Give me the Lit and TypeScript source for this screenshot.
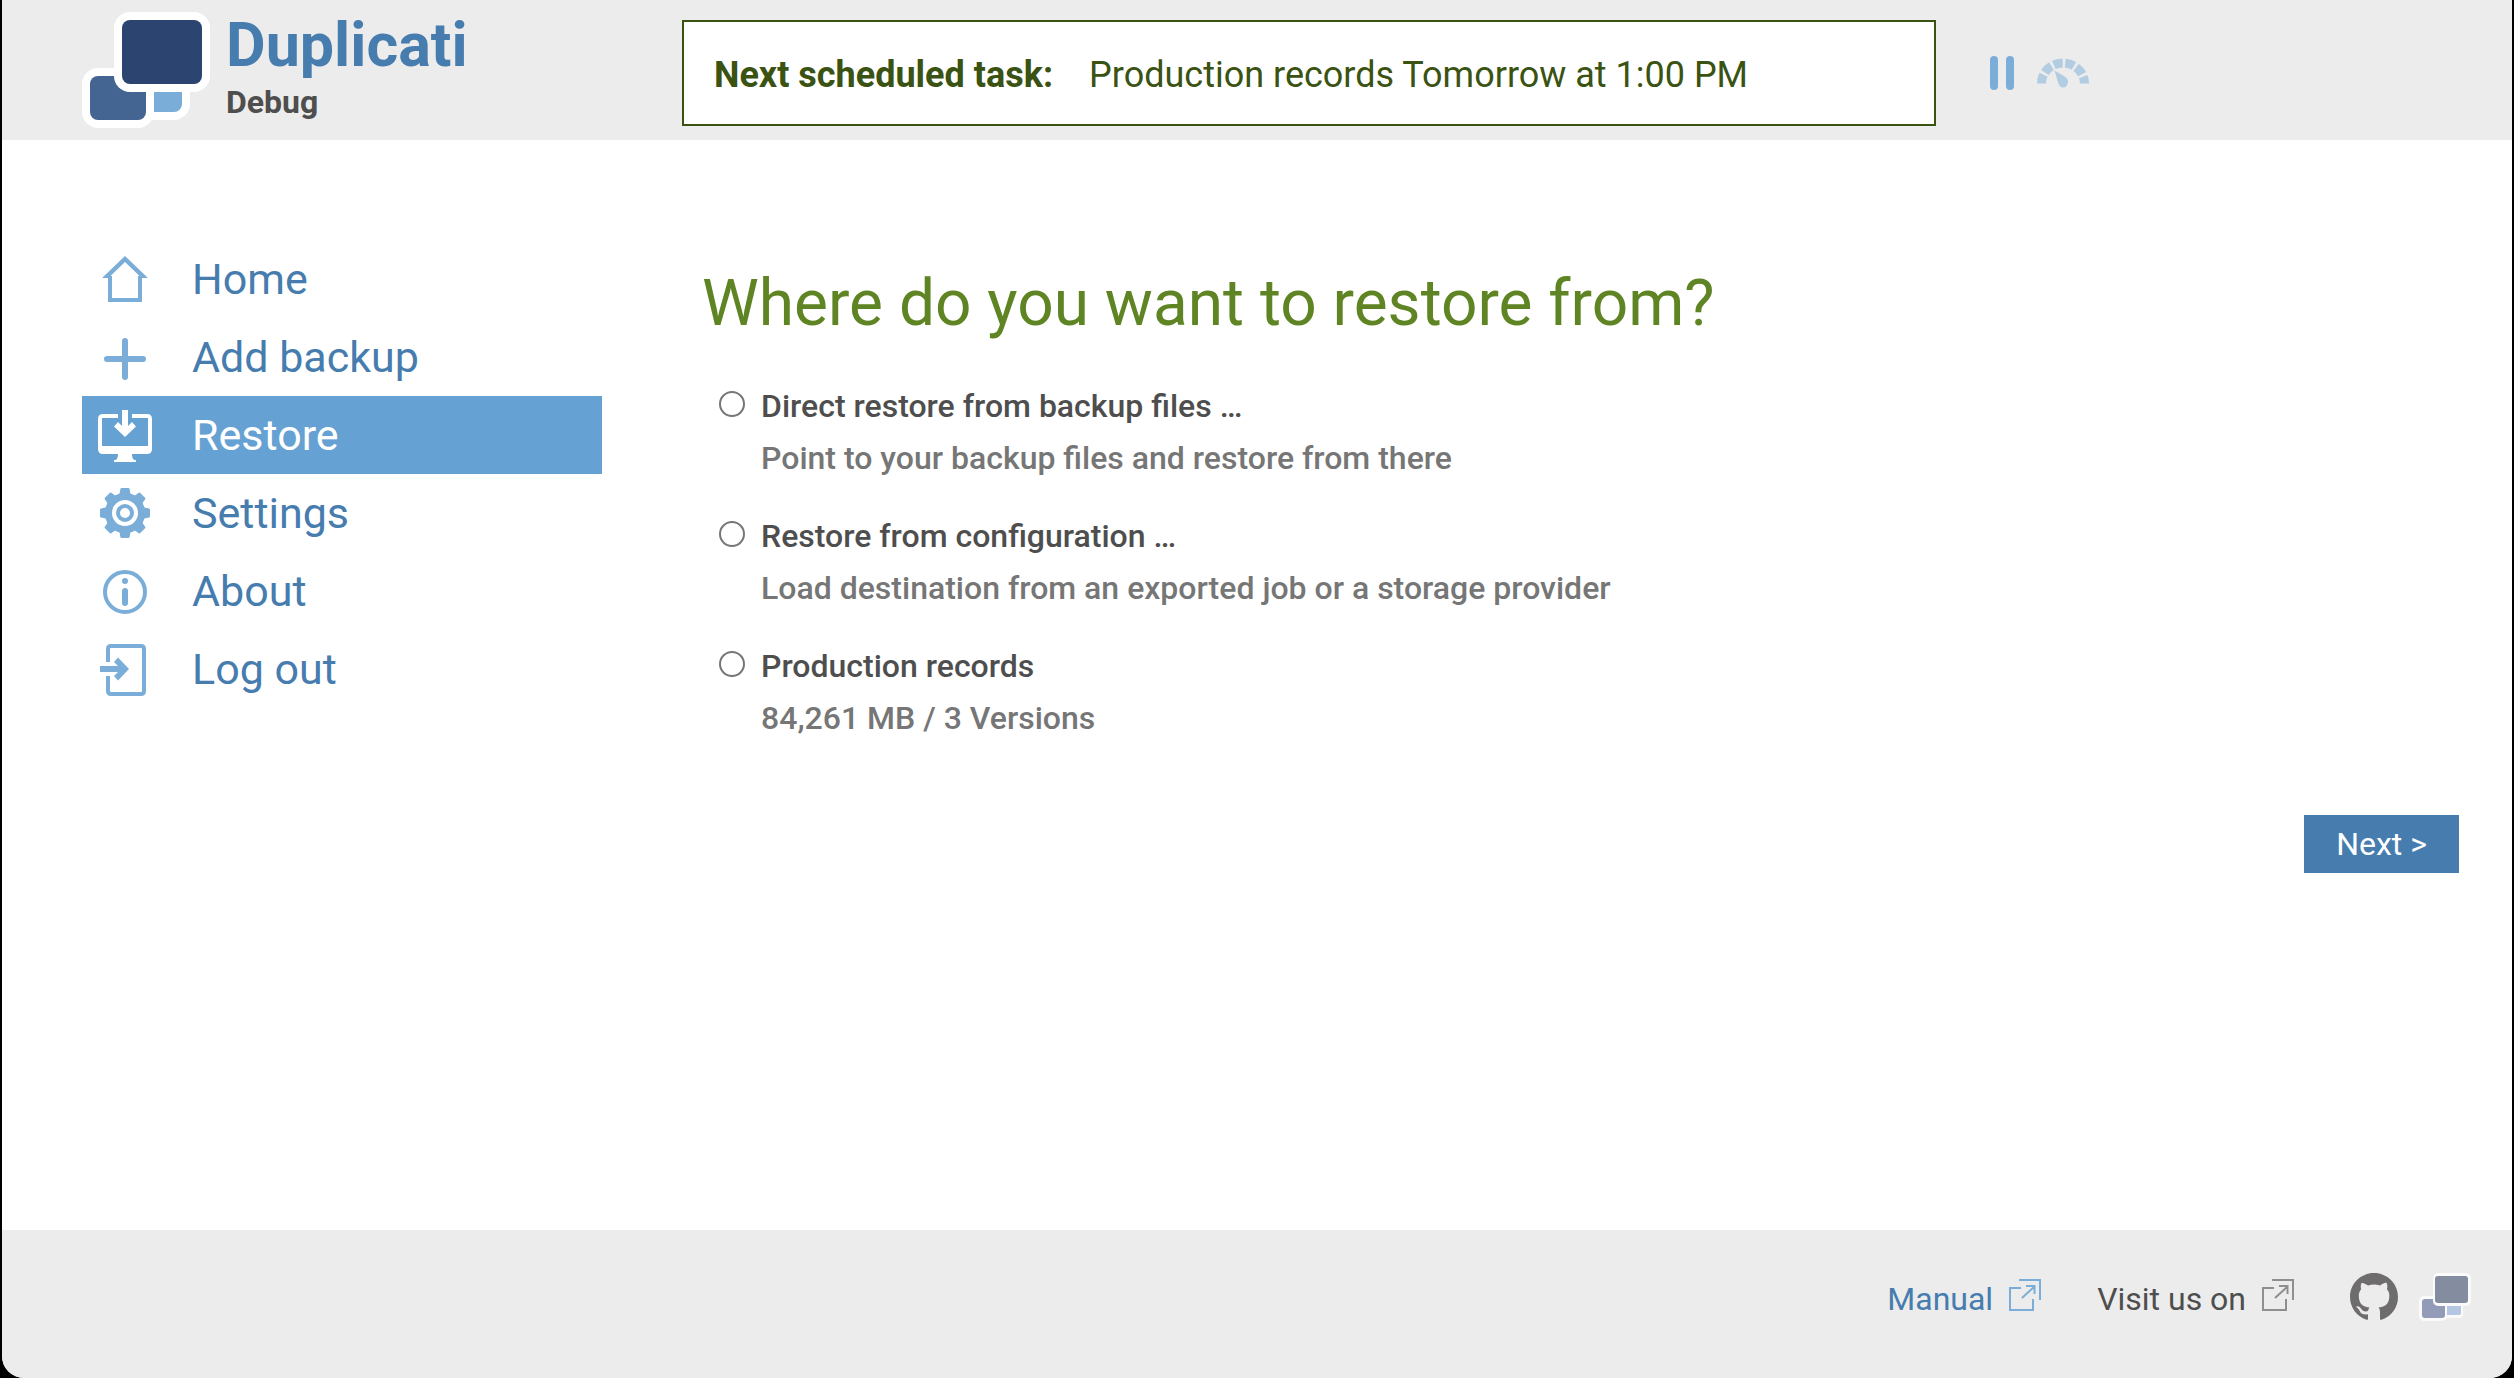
import { LitElement, html, svg, css, nothing } from "lit";
import { customElement, state } from "lit/decorators.js";
import { classMap } from "lit/directives/class-map.js";

const homeIcon = svg`
  <path fill="currentColor" fill-rule="evenodd"
    d="M30 7 53 29H47V53H13V29H7ZM30 13 15.5 27H17V49H43V27H44.5Z"/>`;

const addIcon = svg`
  <path stroke="currentColor" stroke-width="6" stroke-linecap="round" d="M30 14V50M12 32H48"/>`;

const restoreIcon = svg`
  <path fill="currentColor" fill-rule="evenodd"
    d="M23 9H8Q3 9 3 14V44Q3 49 8 49H52Q57 49 57 44V14Q57 9 52 9H37V13H53V41H7V13H23Z"/>
  <path fill="currentColor" d="M27 5H33V21L37 17L41 21.5L30 32L19 21.5L23 17L27 21Z"/>
  <path fill="currentColor" d="M23 48H37C37 53 38 55 41 55.2V57H19V55.2C22 55 23 53 23 48Z"/>`;

const settingsIcon = svg`
  <circle cx="30" cy="30" r="16.5" fill="none" stroke="currentColor" stroke-width="7"/>
  ${[0, 45, 90, 135, 180, 225, 270, 315].map(
    (angle) => svg`
      <path fill="currentColor" transform="rotate(${angle} 30 30)"
        d="M26.6 5H33.4Q34.4 5 34.6 6L35.4 10.6L39 13V15H21V13L24.6 10.6L25.4 6Q25.6 5 26.6 5Z"/>`
  )}
  <circle cx="30" cy="30" r="7" fill="none" stroke="currentColor" stroke-width="4"/>`;

const aboutIcon = svg`
  <circle cx="30" cy="31" r="20" fill="none" stroke="currentColor" stroke-width="4"/>
  <circle cx="30" cy="20" r="3" fill="currentColor"/>
  <path stroke="currentColor" stroke-width="6" stroke-linecap="round" d="M30 30V42"/>`;

const logoutIcon = svg`
  <path fill="none" stroke="currentColor" stroke-width="4"
    d="M13 23V10Q13 7 16 7H46Q49 7 49 10V52Q49 55 46 55H16Q13 55 13 52V37"/>
  <path fill="currentColor" d="M5 27V33H23L19 37L23 41.5L34 30L23 18.5L19 23L23 27Z"/>`;

interface MenuEntry {
  id: string;
  label: string;
  icon: unknown;
}

const menu: MenuEntry[] = [
  { id: "home", label: "Home", icon: homeIcon },
  { id: "add", label: "Add backup", icon: addIcon },
  { id: "restore", label: "Restore", icon: restoreIcon },
  { id: "settings", label: "Settings", icon: settingsIcon },
  { id: "about", label: "About", icon: aboutIcon },
  { id: "logout", label: "Log out", icon: logoutIcon },
];

const sources = [
  {
    id: "direct",
    label: "Direct restore from backup files …",
    hint: "Point to your backup files and restore from there",
  },
  {
    id: "config",
    label: "Restore from configuration …",
    hint: "Load destination from an exported job or a storage provider",
  },
  {
    id: "backup-1",
    label: "Production records",
    hint: "84,261 MB / 3 Versions",
  },
];

const externalIcon = html`
  <svg class="external" viewBox="0 0 32 32" aria-hidden="true">
    <path fill="none" stroke="currentColor" stroke-width="2"
      d="M12 9H1V31H24V20M10 1H31V21M13 19L25 8M17 7H25.5V15"/>
  </svg>`;

@customElement("app-root")
export class AppRoot extends LitElement {
  static styles = css`
    :host {
      display: block;
      background: #000;
      font-family: Roboto, "Noto Sans", sans-serif;
      font-size: 32px;
      line-height: 52px;
      color: #4e4e4e;
    }
    * {
      box-sizing: border-box;
    }
    a {
      color: inherit;
      text-decoration: none;
    }
    svg {
      display: block;
      flex: none;
    }
    .window {
      display: flex;
      flex-direction: column;
      min-height: 100vh;
      margin: 0 2px;
      background: #fff;
      border-radius: 0 0 22px 22px;
      overflow: hidden;
    }
    .header {
      display: flex;
      align-items: flex-start;
      height: 140px;
      padding-left: 80px;
      background: #ececec;
    }
    .brand {
      display: flex;
      gap: 16px;
      flex: 0 0 600px;
      padding-top: 12px;
    }
    .logo {
      width: 128px;
      height: 116px;
    }
    .names {
      display: flex;
      flex-direction: column;
      font-weight: 700;
    }
    .title {
      font-size: 61px;
      line-height: 66px;
      color: #467cae;
    }
    .subtitle {
      line-height: 48px;
    }
    .status {
      display: flex;
      align-items: center;
      gap: 36px;
      flex: 1;
      height: 106px;
      margin-top: 20px;
      padding: 3px 30px 0;
      border: 2px solid #3a5212;
      background: #fff;
      color: #3a5212;
      font-size: 36px;
    }
    .controls {
      display: flex;
      align-items: center;
      gap: 20px;
      flex: 0 0 524px;
      height: 106px;
      margin: 20px 0 0 52px;
      color: #7aaed9;
    }
    .control {
      padding: 0;
      border: 0;
      background: none;
      color: inherit;
      cursor: pointer;
    }
    .throttle {
      opacity: 0.5;
    }
    .body {
      display: flex;
      flex: 1;
      gap: 80px;
      padding: 100px 53px 60px 80px;
    }
    .menu {
      flex: 0 0 520px;
      font-size: 43px;
      color: #467cae;
    }
    .entry {
      display: flex;
      align-items: center;
      gap: 37px;
      height: 78px;
      padding-left: 13px;
    }
    .entry.active {
      background: #66a1d3;
      color: #fff;
    }
    .entry-icon {
      width: 60px;
      height: 60px;
      color: #7aaed9;
    }
    .active .entry-icon {
      color: #fff;
    }
    .content {
      display: flex;
      flex-direction: column;
      flex: 1;
      padding-left: 20px;
    }
    .heading {
      margin: 0;
      padding: 24px 0 36px;
      font-size: 64px;
      font-weight: 400;
      line-height: 80px;
      color: #5f8423;
    }
    .options {
      display: flex;
      flex-direction: column;
      gap: 26px;
      padding-left: 17px;
      font-weight: 500;
    }
    .option {
      display: flex;
      align-items: flex-start;
      gap: 16px;
    }
    .radio {
      appearance: none;
      flex: none;
      width: 26px;
      height: 26px;
      margin: 11px 0 0;
      border: 2px solid #767676;
      border-radius: 50%;
      background: #fff;
    }
    .radio:checked {
      border-color: #467cae;
      background: radial-gradient(#467cae 50%, #fff 55%);
    }
    .hint {
      display: block;
      color: #767676;
    }
    .next {
      align-self: flex-end;
      height: 58px;
      margin-top: 71px;
      padding: 0 32px;
      border: 0;
      background: #467cae;
      color: #fff;
      font: inherit;
      cursor: pointer;
    }
    .footer {
      display: flex;
      justify-content: flex-end;
      align-items: flex-start;
      height: 148px;
      padding: 40px 41px 0 0;
      background: #ececec;
    }
    .link {
      display: flex;
      align-items: center;
      gap: 16px;
      height: 58px;
      margin-right: 56px;
    }
    .manual {
      color: #467cae;
    }
    .external {
      width: 32px;
      height: 32px;
      margin-bottom: 8px;
      color: #8f8f8f;
    }
    .manual .external {
      color: #7aaed9;
    }
    .social {
      display: flex;
      align-items: center;
      gap: 21px;
      height: 56px;
      padding-bottom: 2px;
    }
    .github {
      width: 48px;
      height: 48px;
      color: #6e6c6c;
    }
    .forum {
      width: 52px;
      height: 48px;
    }
  `;

  @state() private page = "restore";
  @state() private source = "";

  private renderEntry(entry: MenuEntry) {
    const active = entry.id === this.page;
    return html`
      <a
        class=${classMap({ entry: true, active })}
        href="#${entry.id}"
        aria-current=${active ? "page" : nothing}
        @click=${() => (this.page = entry.id)}
      >
        <svg class="entry-icon" viewBox="0 0 60 60" aria-hidden="true">${entry.icon}</svg>
        <span>${entry.label}</span>
      </a>`;
  }

  render() {
    return html`
      <div class="window">
        <header class="header">
          <a class="brand" href="#home">
            <svg class="logo" viewBox="0 0 128 116" aria-hidden="true">
              <rect x="48" y="60" width="60" height="48" rx="16" fill="#fff"/>
              <rect x="64" y="68" width="36" height="32" rx="8" fill="#7aaed9"/>
              <rect x="0" y="56" width="72" height="60" rx="16" fill="#fff"/>
              <rect x="8" y="64" width="56" height="44" rx="8" fill="#446592"/>
              <rect x="32" y="0" width="96" height="80" rx="16" fill="#fff"/>
              <rect x="40" y="8" width="80" height="64" rx="8" fill="#2b4570"/>
            </svg>
            <span class="names">
              <span class="title">Duplicati</span>
              <span class="subtitle">Debug</span>
            </span>
          </a>
          <div class="status">
            <strong>Next scheduled task:</strong>
            <span>Production records Tomorrow at 1:00 PM</span>
          </div>
          <div class="controls">
            <button class="control" type="button" aria-label="Pause">
              <svg width="28" height="34" viewBox="0 0 28 34">
                <rect x="2" width="8" height="34" rx="4" fill="currentColor"/>
                <rect x="18" width="8" height="34" rx="4" fill="currentColor"/>
              </svg>
            </button>
            <button class="control throttle" type="button" aria-label="Throttle">
              <svg width="54" height="30" viewBox="0 0 54 30">
                <path fill="none" stroke="currentColor" stroke-width="9" stroke-dasharray="9 2.7"
                  d="M5.5 25.5A21.5 20.5 0 0 1 48.5 25.5"/>
                <path fill="currentColor"
                  d="M18.5 12.5L28.5 18.5Q32.5 21 32 24.5Q31 29.5 27 29.5Q23.5 29.5 22 24.5Z"/>
              </svg>
            </button>
          </div>
        </header>

        <div class="body">
          <nav class="menu">${menu.map((entry) => this.renderEntry(entry))}</nav>
          <main class="content">
            <h1 class="heading">Where do you want to restore from?</h1>
            <div class="options" role="radiogroup" aria-label="Restore source">
              ${sources.map(
                (item) => html`
                  <div class="option">
                    <input
                      class="radio"
                      type="radio"
                      name="source"
                      id=${item.id}
                      .checked=${this.source === item.id}
                      @change=${() => (this.source = item.id)}
                    />
                    <label for=${item.id}>
                      ${item.label}
                      <span class="hint">${item.hint}</span>
                    </label>
                  </div>`
              )}
            </div>
            <button class="next" type="button">Next &gt;</button>
          </main>
        </div>

        <footer class="footer">
          <a class="link manual" href="#manual">Manual ${externalIcon}</a>
          <a class="link" href="#visit">Visit us on ${externalIcon}</a>
          <div class="social">
            <a href="#github" aria-label="GitHub">
              <svg class="github" viewBox="0 0 16 16">
                <path fill="currentColor"
                  d="M8 0C3.58 0 0 3.58 0 8c0 3.54 2.29 6.53 5.47 7.59.4.07.55-.17.55-.38 0-.19-.01-.82-.01-1.49-2.01.37-2.53-.49-2.69-.94-.09-.23-.48-.94-.82-1.13-.28-.15-.68-.52-.01-.53.63-.01 1.08.58 1.23.82.72 1.21 1.87.87 2.33.66.07-.52.28-.87.51-1.07-1.78-.2-3.64-.89-3.64-3.95 0-.87.31-1.59.82-2.15-.08-.2-.36-1.02.08-2.12 0 0 .67-.21 2.2.82.64-.18 1.32-.27 2-.27s1.36.09 2 .27c1.53-1.04 2.2-.82 2.2-.82.44 1.1.16 1.92.08 2.12.51.56.82 1.27.82 2.15 0 3.07-1.87 3.75-3.65 3.95.29.25.54.73.54 1.48 0 1.07-.01 1.93-.01 2.2 0 .21.15.46.55.38A8.01 8.01 0 0 0 16 8c0-4.42-3.58-8-8-8z"/>
              </svg>
            </a>
            <a href="#forum" aria-label="Duplicati forum">
              <svg class="forum" viewBox="0 0 52 48">
                <rect x="20" y="26" width="24" height="19" rx="4" fill="#fafafa"/>
                <rect x="26" y="28" width="16" height="14" rx="2" fill="#b4c6e2"/>
                <rect x="0" y="23" width="28" height="25" rx="5" fill="#fafafa"/>
                <rect x="3" y="26" width="23" height="19" rx="3" fill="#929cb8"/>
                <rect x="14" y="0" width="38" height="33" rx="5" fill="#fafafa"/>
                <rect x="16" y="3" width="33" height="27" rx="3" fill="#848ca0"/>
              </svg>
            </a>
          </div>
        </footer>
      </div>`;
  }
}
